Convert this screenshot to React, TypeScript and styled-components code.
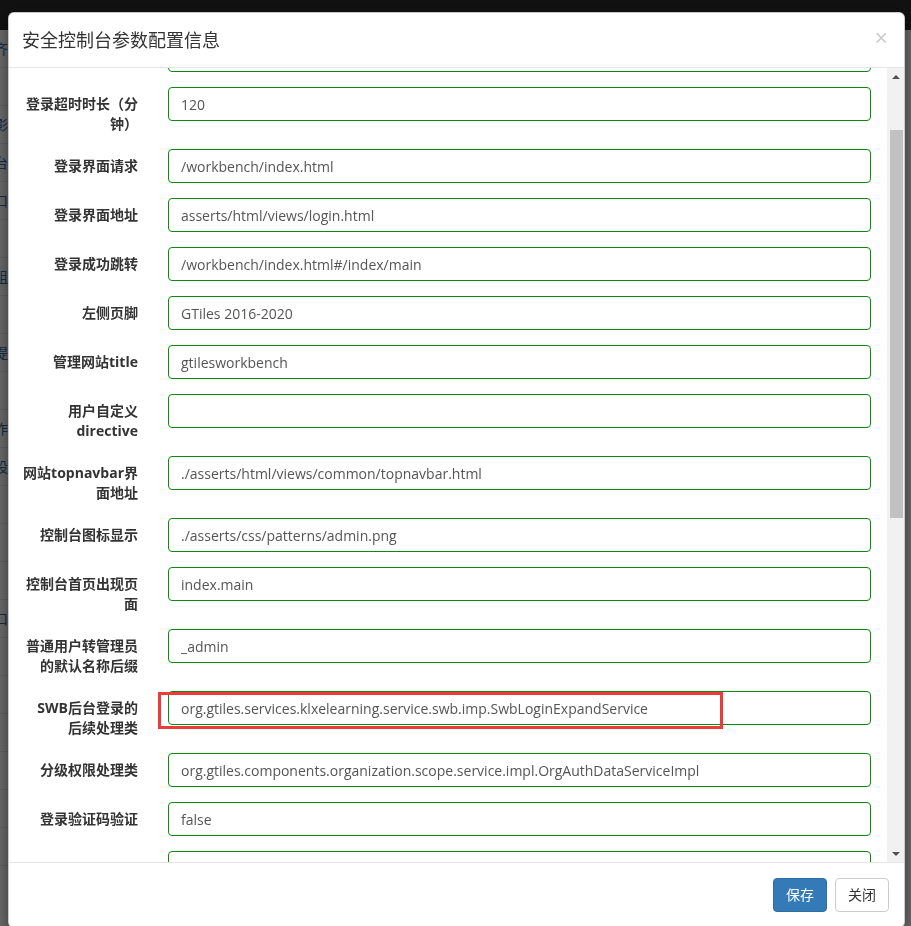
import { useEffect, useRef } from "react";
import styled, { createGlobalStyle } from "styled-components";

const GlobalStyle = createGlobalStyle`
  html, body {
    margin: 0;
    height: 100%;
    overflow: hidden;
  }
  body {
    font-family: "Open Sans", "Noto Sans CJK SC", sans-serif;
    font-size: 14px;
    color: #333;
    background: #d6d6d6;
  }
  * {
    box-sizing: border-box;
  }
`;

// dimmed page behind the dialog, only a sliver shows on the left
const Page = styled.div`
  height: 926px;
  background: #d6d6d6;
`;

const NavBar = styled.div`
  height: 30px;
  background: #232323;
`;

const PageRow = styled.div`
  width: 8px;
  height: 38px;
  border-bottom: 1px solid #c4c4c4;
  line-height: 38px;
  color: #2a5b8c;
  white-space: nowrap;
  overflow: hidden;
  text-indent: -6px;
`;

const Backdrop = styled.div`
  position: fixed;
  inset: 0;
  background: rgba(0, 0, 0, 0.5);
`;

const Dialog = styled.div`
  position: fixed;
  top: 12px;
  left: 8px;
  width: 897px;
  display: flex;
  flex-direction: column;
  background: #fff;
  border: 1px solid rgba(0, 0, 0, 0.2);
  border-radius: 6px;
  box-shadow: 0 5px 15px rgba(0, 0, 0, 0.5);
`;

const Header = styled.div`
  height: 55px;
  padding: 0 16px 0 13px;
  display: flex;
  align-items: center;
  justify-content: space-between;
  border-bottom: 1px solid #e5e5e5;
`;

const Title = styled.h4`
  margin: 0;
  font-size: 18px;
  font-weight: normal;
  line-height: 26px;
  color: #333;
`;

const CloseX = styled.button`
  border: 0;
  background: transparent;
  padding: 0;
  margin-top: -3px;
  font-family: "Liberation Sans", sans-serif;
  font-size: 23px;
  font-weight: normal;
  line-height: 1;
  color: #000;
  opacity: 0.2;
  cursor: pointer;
`;

const Body = styled.div`
  height: 794px;
  display: flex;
`;

const Content = styled.div`
  flex: 1;
  overflow: hidden;
  padding: 15px 16px 0 14px;
`;

const ScrollBar = styled.div`
  width: 17px;
  display: flex;
  flex-direction: column;
  background: #f1f1f1;
`;

const ArrowButton = styled.div<{ down?: boolean }>`
  height: 17px;
  display: flex;
  align-items: center;
  justify-content: center;

  &::before {
    content: "";
    width: 0;
    height: 0;
    border-left: 4px solid transparent;
    border-right: 4px solid transparent;
    ${(p) =>
      p.down ? "border-top: 4px solid #505050;" : "border-bottom: 4px solid #505050;"}
  }
`;

const Track = styled.div`
  flex: 1;
  padding: 45px 1px 0 3px;
`;

const Thumb = styled.div`
  height: 388px;
  background: #c1c1c1;
`;

const FormRow = styled.div`
  display: grid;
  grid-template-columns: 115px 1fr;
  column-gap: 30px;
  margin-bottom: 15px;
`;

const Label = styled.label`
  padding-top: 7px;
  font-weight: bold;
  line-height: 20px;
  text-align: right;
  white-space: pre-line;
  color: #333;
`;

const Field = styled.div`
  position: relative;
`;

const Input = styled.input`
  display: block;
  width: 100%;
  height: 34px;
  padding: 6px 12px;
  font: inherit;
  font-size: 14px;
  color: #555;
  background: #fff;
  border: 1px solid #0d8a0d;
  border-radius: 4px;
  outline: none;
`;

// red annotation drawn over the screenshot
const Mark = styled.div`
  position: absolute;
  left: -10px;
  top: 1px;
  width: 565px;
  height: 37px;
  border: 3px solid #ee3a3a;
  pointer-events: none;
`;

const Footer = styled.div`
  display: flex;
  justify-content: flex-end;
  gap: 8px;
  padding: 15px;
  border-top: 1px solid #e5e5e5;
`;

const Button = styled.button<{ primary?: boolean }>`
  height: 34px;
  padding: 6px 12px;
  font: inherit;
  font-size: 14px;
  line-height: 20px;
  border-radius: 4px;
  border: 1px solid ${(p) => (p.primary ? "#2e6da4" : "#ccc")};
  background: ${(p) => (p.primary ? "#337ab7" : "#fff")};
  color: ${(p) => (p.primary ? "#fff" : "#333")};
  cursor: pointer;
`;

type Setting = { label: string; value: string; mark?: boolean };

const settings: Setting[] = [
  { label: "系统名称", value: "gtiles" },
  { label: "登录页面标题", value: "GTiles" },
  { label: "登录超时时长（分钟）", value: "120" },
  { label: "登录界面请求", value: "/workbench/index.html" },
  { label: "登录界面地址", value: "asserts/html/views/login.html" },
  { label: "登录成功跳转", value: "/workbench/index.html#/index/main" },
  { label: "左侧页脚", value: "GTiles 2016-2020" },
  { label: "管理网站title", value: "gtilesworkbench" },
  { label: "用户自定义directive", value: "" },
  { label: "网站topnavbar界面地址", value: "./asserts/html/views/common/topnavbar.html" },
  { label: "控制台图标显示", value: "./asserts/css/patterns/admin.png" },
  { label: "控制台首页出现页面", value: "index.main" },
  { label: "普通用户转管理员的默认名称后缀", value: "_admin" },
  {
    label: "SWB后台登录的\n后续处理类",
    value: "org.gtiles.services.klxelearning.service.swb.imp.SwbLoginExpandService",
    mark: true,
  },
  {
    label: "分级权限处理类",
    value: "org.gtiles.components.organization.scope.service.impl.OrgAuthDataServiceImpl",
  },
  { label: "登录验证码验证", value: "false" },
  { label: "", value: "7" },
  { label: "单点登录地址", value: "" },
  { label: "单点登出地址", value: "" },
  { label: "系统默认主题", value: "default" },
  { label: "上传文件路径", value: "/upload" },
  { label: "上传文件大小限制（MB）", value: "50" },
  { label: "允许上传的文件类型后缀", value: "jpg,png,gif,doc,docx,xls,xlsx,pdf" },
  { label: "首页地址", value: "index.main" },
  { label: "默认语言", value: "zh_CN" },
  { label: "会话存储方式", value: "redis" },
  { label: "密码加密方式", value: "md5" },
  { label: "日志级别", value: "info" },
  { label: "缓存过期时间", value: "3600" },
];

const pageRows = ["齐", "", "影", "台", "口", "", "组", "", "提", "", "作", "设", "", "", "", "口", "", "", "", "", "", ""];

function App() {
  const contentRef = useRef<HTMLDivElement>(null);

  useEffect(() => {
    if (contentRef.current) contentRef.current.scrollTop = 94; // dialog was scrolled a bit
  }, []);

  return (
    <>
      <GlobalStyle />
      <Page>
        <NavBar />
        {pageRows.map((t, i) => (
          <PageRow key={i}>{t}</PageRow>
        ))}
      </Page>
      <Backdrop />
      <Dialog>
        <Header>
          <Title>安全控制台参数配置信息</Title>
          <CloseX>×</CloseX>
        </Header>
        <Body>
          <Content ref={contentRef}>
            {settings.map((s, i) => (
              <FormRow key={i}>
                <Label>{s.label}</Label>
                <Field>
                  <Input defaultValue={s.value} />
                  {s.mark && <Mark />}
                </Field>
              </FormRow>
            ))}
          </Content>
          <ScrollBar>
            <ArrowButton />
            <Track>
              <Thumb />
            </Track>
            <ArrowButton down />
          </ScrollBar>
        </Body>
        <Footer>
          <Button primary>保存</Button>
          <Button>关闭</Button>
        </Footer>
      </Dialog>
    </>
  );
}

export default App;
